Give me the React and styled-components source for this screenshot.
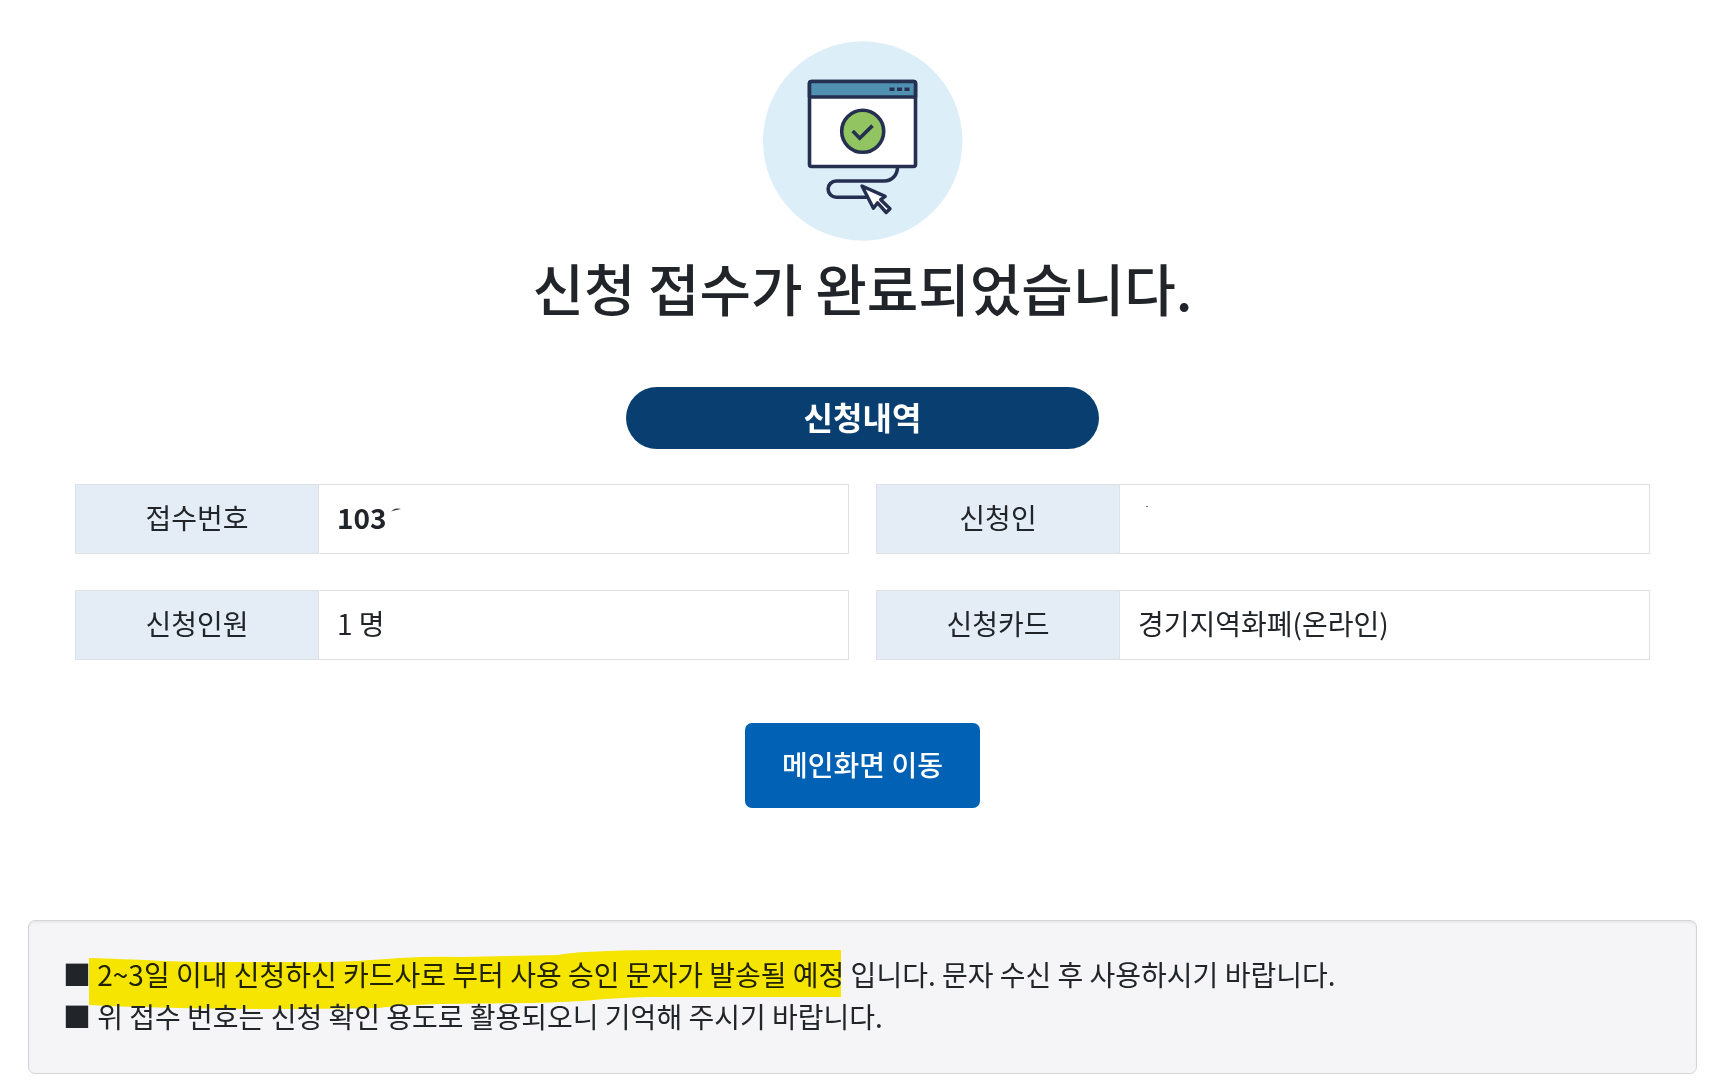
import React from "react"
import styled, {createGlobalStyle} from "styled-components"

const GlobalStyle = createGlobalStyle`
    * {
        box-sizing: border-box;
    }

    body {
        margin: 0;
        background: #fff;
        color: #212529;
        font-family: "Noto Sans CJK KR", sans-serif;
        font-size: 28px;
        line-height: 42px;
    }
`

const Page = styled.main`
    display: flex;
    flex-direction: column;
    align-items: center;
    padding: 41px 25px 12px 28px;
`

const Badge = styled.svg`
    display: block;
    width: 200px;
    height: 200px;
`

const Title = styled.h1`
    margin: 12px 0 66px;
    font-size: 56px;
    font-weight: 500;
    line-height: 68px;
    text-align: center;
`

const Details = styled.section`
    width: 100%;
    padding: 0 47px;
`

const SectionTitle = styled.h2`
    width: 30%;
    margin: 0 auto 35px;
    padding: 8px 0 12px;
    border-radius: 31px;
    background: #083f70;
    color: #fff;
    font-size: 32px;
    font-weight: 700;
    line-height: 42px;
    text-align: center;
`

const Fields = styled.dl`
    display: grid;
    grid-template-columns: 1fr 1fr;
    gap: 36px 27px;
    margin: 0;
`

const Field = styled.div`
    display: flex;
    border: 1px solid #dee2e6;
`

const Label = styled.dt`
    width: 243px;
    padding: 11px 0 15px;
    border-right: 1px solid #dee2e6;
    background: #e4edf6;
    text-align: center;
`

const Value = styled.dd`
    display: flex;
    flex: 1;
    margin: 0;
    padding: 11px 18px 15px;
    font-weight: ${props => props.$bold ? 700 : 400};
`

const Mark = styled.svg`
    display: block;
    width: 16px;
    height: 42px;
`

const HomeButton = styled.button`
    margin: 63px 0 112px;
    padding: 20px 37px 23px;
    border: 0;
    border-radius: 7px;
    background: #0061b5;
    color: #fff;
    font: inherit;
    font-weight: 500;
    cursor: pointer;

    &:hover {
        background: #00529a;
    }
`

const Notice = styled.ul`
    width: 100%;
    margin: 0;
    padding: 32px 34px 36px;
    border: 1px solid #d4d5d7;
    border-radius: 7px;
    background: #f5f5f8;
    box-shadow: inset 0 2px 2px rgba(0, 0, 0, 0.05);
    list-style: none;
`

const NoticeItem = styled.li`
    position: relative;
`

// pen stroke laid over the text
const Highlight = styled.svg`
    position: absolute;
    top: -4px;
    left: 26px;
    width: 752px;
    height: 60px;
    mix-blend-mode: multiply;
    pointer-events: none;
`

const CompleteIcon = () => (
    <Badge viewBox="0 0 200 200" aria-hidden="true">
        <circle cx="99.7" cy="100" r="99.7" fill="#dceef8" />
        <g stroke="#252f50" strokeWidth="3.6" fill="none" strokeLinejoin="round">
            <rect x="46.5" y="40.5" width="106" height="85" rx="2" fill="#fff" />
            <path d="M46.5 56V42.5q0-2 2-2h102q2 0 2 2V56z" fill="#5090b0" />
            <path d="M126.500 48.300h5M134 48.300h5M141.500 48.300h5" strokeWidth="3.6" />
            <circle cx="99.7" cy="90.3" r="21" fill="#92c562" />
            <path d="M89.700 90l7 7.200 12.800-12.600" strokeLinejoin="miter" />
            <path d="M134.500 126c0 8-5.500 14-13.500 14H73.200a8.100 8.100 0 0 0 0 16.200H104" />
            <path d="M99 145l11.400 22.300 4.200-5.400 8.600 9.600 3.800-3.800-9.300-9 4.500-3.300z" fill="#fff" strokeWidth="3.4" />
        </g>
    </Badge>
)

const App = () => {
    return (
        <>
            <GlobalStyle />
            <Page>
                <CompleteIcon />
                <Title>신청 접수가 완료되었습니다.</Title>
                <Details>
                    <SectionTitle>신청내역</SectionTitle>
                    <Fields>
                        <Field>
                            <Label>접수번호</Label>
                            <Value $bold>
                                103
                                <Mark viewBox="0 0 16 42" aria-hidden="true">
                                    <path d="M4 15.500q4-4 10-2.500-5 .5-10 2.500z" fill="#212529" />
                                </Mark>
                            </Value>
                        </Field>
                        <Field>
                            <Label>신청인</Label>
                            <Value>
                                <Mark viewBox="0 0 16 42" aria-hidden="true">
                                    <path d="M8 10h2v1H8z" fill="#71767a" />
                                </Mark>
                            </Value>
                        </Field>
                        <Field>
                            <Label>신청인원</Label>
                            <Value>1 명</Value>
                        </Field>
                        <Field>
                            <Label>신청카드</Label>
                            <Value>경기지역화폐(온라인)</Value>
                        </Field>
                    </Fields>
                </Details>
                <HomeButton type="button">메인화면 이동</HomeButton>
                <Notice>
                    <NoticeItem>
                        ■ 2~3일 이내 신청하신 카드사로 부터 사용 승인 문자가 발송될 예정 입니다. 문자 수신 후 사용하시기 바랍니다.
                        <Highlight viewBox="0 0 752 60" aria-hidden="true">
                            <path
                                d="M0 9L17 9.500Q30 10 56 11Q90 13 130 13H240Q275 12 311 9Q345 7 371 8L469 6Q480 4 496 3Q530 1 570 1H752V48H560Q525 49 505 51Q485 53 440 54L351 55Q310 56 290 59Q240 60 160 60Q60 59 0 56Z"
                                fill="#ffef00"
                            />
                        </Highlight>
                    </NoticeItem>
                    <NoticeItem>■ 위 접수 번호는 신청 확인 용도로 활용되오니 기억해 주시기 바랍니다.</NoticeItem>
                </Notice>
            </Page>
        </>
    )
}

export default App
